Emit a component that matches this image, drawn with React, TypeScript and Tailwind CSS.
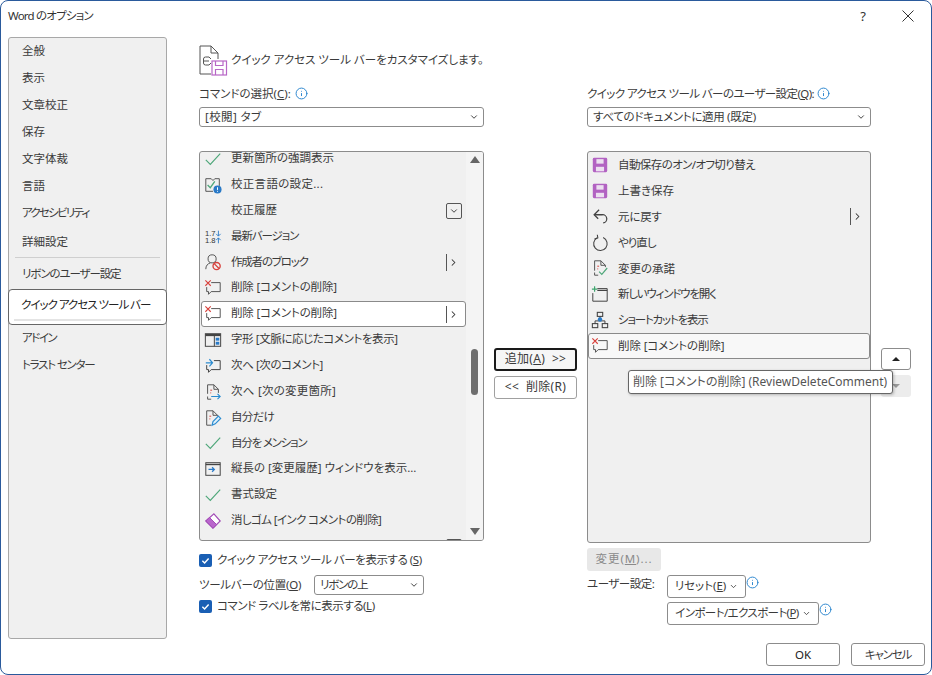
import { ChevronDown, ChevronRight, Info } from 'lucide-react';
import type { ReactNode } from 'react';

const line = '#555';

function Ico({ children }: { children: ReactNode }) {
  return (
    <svg width="18" height="18" viewBox="0 0 20 20" fill="none" stroke={line} strokeWidth="1.1">
      {children}
    </svg>
  );
}

const CheckIcon = () => (
  <Ico><path d="M2 11l5 5L18 4" stroke="#4fa77a" strokeWidth="1.3" /></Ico>
);
const LangIcon = () => (
  <Ico>
    <path d="M2 3h6l2 2 2-2h5v8M2 3v14h8" />
    <path d="M4 10l3 3 5-7" stroke="#4fa77a" strokeWidth="1.5" />
    <circle cx="15" cy="15" r="4.5" fill="#2a7ac7" stroke="none" />
    <path d="M15 12.5v3M15 16.5v1" stroke="#fff" />
  </Ico>
);
const VersionIcon = () => (
  <svg width="18" height="18" viewBox="0 0 20 20">
    <text x="1" y="9" fontSize="8.5" fill="#333" fontFamily="Liberation Sans">1.7</text>
    <text x="1" y="17" fontSize="8.5" fill="#333" fontFamily="Liberation Sans">1.8</text>
    <path d="M16 3v6M13.5 6.5L16 9l2.5-2.5" stroke="#2a7ac7" fill="none" />
    <path d="M16 17v-6M13.5 13.5L16 11l2.5 2.5" stroke="#2a7ac7" fill="none" />
  </svg>
);
const BlockIcon = () => (
  <Ico>
    <circle cx="9" cy="6.5" r="4.5" />
    <path d="M2 18c0-4 2-6 5-7" />
    <circle cx="14" cy="14.5" r="4" stroke="#d8413c" strokeWidth="1.5" />
    <path d="M11.3 11.8l5.4 5.4" stroke="#d8413c" strokeWidth="1.5" />
  </Ico>
);
const DeleteCommentIcon = () => (
  <Ico>
    <path d="M8 4h10v10H8l-3 3v-3H3V9" />
    <path d="M1.5 1.5l6 6M7.5 1.5l-6 6" stroke="#d8413c" strokeWidth="1.2" />
  </Ico>
);
const PaneIcon = () => (
  <Ico>
    <rect x="1.5" y="3" width="17" height="14" stroke="#444" />
    <path d="M1.5 4.5h17" stroke="#444" strokeWidth="2.4" />
    <path d="M11.5 5v12" stroke="#444" />
    <rect x="13" y="7.5" width="4" height="3.2" fill="#2a7ac7" stroke="none" />
    <rect x="13" y="12" width="4" height="3.2" fill="#2a7ac7" stroke="none" />
  </Ico>
);
const NextCommentIcon = () => (
  <Ico>
    <path d="M11 4h7v10H8l-3 3v-3H3V9" stroke="#444" />
    <path d="M2 6.5h7M6 2.5l3.5 4-3.5 4" stroke="#2a8bd0" strokeWidth="1.3" />
  </Ico>
);
const NextChangeIcon = () => (
  <Ico>
    <path d="M4 12V2h7l5 5v4M11 2v5h5M4 15v3h4" />
    <path d="M7 8h2M7 11h1" stroke="#d8413c" />
    <path d="M8 15h10M15 12l3 3-3 3" stroke="#2a8bd0" strokeWidth="1.2" />
  </Ico>
);
const PenDocIcon = () => (
  <Ico>
    <path d="M3 18V2h7l5 5v1M10 2v5h5M3 18h5" />
    <path d="M6 8h2M6 11h1" stroke="#d8413c" />
    <path d="M9 18l1-4 6-6 2.5 2.5-6 6z" fill="#dff0fa" stroke="#2a8bd0" strokeWidth="1.3" />
  </Ico>
);
const ReviewPaneIcon = () => (
  <Ico>
    <rect x="2" y="3" width="16" height="14" stroke="#444" />
    <path d="M2 5h16" stroke="#444" strokeWidth="1.5" />
    <path d="M5 10.5h6M9 8l2.5 2.5L9 13" stroke="#2a7ac7" strokeWidth="1.4" />
  </Ico>
);
const EraserIcon = () => (
  <Ico>
    <path d="M11 2l7 8-8 8-8-8z" fill="#fff" stroke="#a24bb6" strokeWidth="1.3" />
    <path d="M6 6l8 8-4 4-8-8z" fill="#b966cc" stroke="#a24bb6" />
  </Ico>
);
const SaveIcon = () => (
  <svg width="18" height="18" viewBox="0 0 20 20">
    <rect x="2" y="2" width="16" height="16" rx="1.5" fill="#b262c2" />
    <rect x="6" y="3.5" width="8" height="5" fill="#ecdff0" />
    <rect x="5.5" y="12" width="9" height="5" fill="#ecdff0" />
  </svg>
);
const UndoIcon = () => (
  <Ico>
    <path d="M4 7.5h8.5a4.5 4.5 0 0 1 1 9" stroke="#444" strokeWidth="1.4" />
    <path d="M9 2L3.5 7.5 8 12" stroke="#444" strokeWidth="1.4" />
  </Ico>
);
const RedoIcon = () => (
  <Ico>
    <path d="M7 4.2A7.5 7.5 0 1 0 13.5 4" stroke="#444" strokeWidth="1.2" />
    <path d="M7 .8l.6 3.6-3.8 1.2" stroke="#444" strokeWidth="1.2" />
  </Ico>
);
const AcceptIcon = () => (
  <Ico>
    <path d="M4 13V2h7l5 5v2M11 2v5h5M4 15v3h4" />
    <path d="M7 8h2M7 11h1" stroke="#d8413c" />
    <path d="M9 14l3 3 6-7" stroke="#4fa77a" strokeWidth="1.3" />
  </Ico>
);
const NewWindowIcon = () => (
  <Ico>
    <path d="M7 4h11v14H2V9" stroke="#444" />
    <path d="M7 6h11" stroke="#444" strokeWidth="1.4" />
    <path d="M4 1.5v6M1 4.5h6" stroke="#3ea56e" strokeWidth="1.3" />
  </Ico>
);
const ShortcutIcon = () => (
  <Ico>
    <rect x="7" y="1.5" width="6" height="4.5" stroke="#444" strokeWidth="1.2" />
    <rect x="1.5" y="14" width="6" height="4.5" stroke="#444" strokeWidth="1.2" />
    <rect x="12.5" y="14" width="6" height="4.5" stroke="#444" strokeWidth="1.2" />
    <path d="M10 6v4M4.5 14v-3h11v3" stroke="#444" />
    <circle cx="10" cy="9.5" r="2.5" fill="#2a7ac7" stroke="none" />
  </Ico>
);
const CustomizeIcon = () => (
  <svg width="29" height="31" viewBox="0 0 29 31" fill="none" stroke="#555" strokeWidth="1">
    <path d="M1 29V1h11l7 7v6M12 1v7h7M1 29h11" />
    <path d="M10 12H6.5a2 2 0 0 0-2 2v4a2 2 0 0 0 2 2H10M4.5 16H10" />
    <path d="M10 12l2 2M10 20l2-2" />
    <rect x="13" y="16" width="14.5" height="14" stroke="#b867c6" strokeWidth="1.2" />
    <path d="M16.5 16v4.5h7.5V16M16.5 30v-5.5h7.5V30" stroke="#b867c6" strokeWidth="1.2" />
  </svg>
);

function InfoMark() {
  return <Info size={13} strokeWidth={1.8} className="text-[#2b86cf] shrink-0" />;
}

function Split() {
  return (
    <span className="flex items-center ml-auto mr-[6px]">
      <span className="w-px h-[17px] bg-[#555]" />
      <ChevronRight size={11} strokeWidth={2.2} className="text-[#333] ml-[1px]" />
    </span>
  );
}

function BoxChevron() {
  return (
    <span className="ml-auto mr-[3px] w-[16px] h-[16px] border border-[#555] rounded-[2px] flex items-center justify-center">
      <ChevronDown size={10} strokeWidth={2.2} className="text-[#333]" />
    </span>
  );
}

type RowProps = {
  icon?: ReactNode;
  text?: string;
  trailing?: 'split' | 'box';
  selected?: string;
  track?: string;
  low?: boolean;
};

function Row({ icon, text, trailing, selected, track, low }: RowProps) {
  return (
    <div
      className={`flex items-center h-[25.87px] shrink-0 rounded-[3px] border ${
        selected ?? 'border-transparent'
      }`}
    >
      <span className="flex items-center shrink-0 w-[29px] pl-[2px]">{icon}</span>
      {text && <span className={`whitespace-nowrap ${low ? '' : 'pb-[2px]'} ${track ?? ''}`}>{text}</span>}
      {trailing === 'split' && <Split />}
      {trailing === 'box' && <BoxChevron />}
    </div>
  );
}

const leftRows: RowProps[] = [
  { icon: <CheckIcon />, text: '更新箇所の強調表示' },
  { icon: <LangIcon />, text: '校正言語の設定...', track: 'tracking-[0.3px]' },
  { text: '校正履歴', trailing: 'box' },
  { icon: <VersionIcon />, text: '最新バージョン', track: 'tracking-[-1.1px]' },
  { icon: <BlockIcon />, text: '作成者のブロック', trailing: 'split', track: 'tracking-[-1.2px]' },
  { icon: <DeleteCommentIcon />, text: '削除 [コメントの削除]', track: 'tracking-[-0.15px]' },
  { icon: <DeleteCommentIcon />, text: '削除 [コメントの削除]', trailing: 'split', selected: 'bg-white border-[#8a8a8a]', track: 'tracking-[-0.15px]' },
  { icon: <PaneIcon />, text: '字形 [文脈に応じたコメントを表示]', track: 'tracking-[-0.4px]' },
  { icon: <NextCommentIcon />, text: '次へ [次のコメント]', track: 'tracking-[-0.4px]' },
  { icon: <NextChangeIcon />, text: '次へ [次の変更箇所]', track: 'tracking-[0.25px]' },
  { icon: <PenDocIcon />, text: '自分だけ', track: 'tracking-[-0.7px]' },
  { icon: <CheckIcon />, text: '自分を メンション', track: 'tracking-[-1.2px]' },
  { icon: <ReviewPaneIcon />, text: '縦長の [変更履歴] ウィンドウを表示...' },
  { icon: <CheckIcon />, text: '書式設定' },
  { icon: <EraserIcon />, text: '消しゴム [インク コメントの削除]', track: 'tracking-[-0.6px]' },
  { trailing: 'box' },
];

const rightRows: RowProps[] = [
  { icon: <SaveIcon />, text: '自動保存のオン/オフ切り替え', track: 'tracking-[-0.6px]' },
  { icon: <SaveIcon />, text: '上書き保存' },
  { icon: <UndoIcon />, text: '元に戻す', trailing: 'split', track: 'tracking-[-0.2px]' },
  { icon: <RedoIcon />, text: 'やり直し', track: 'tracking-[-1px]' },
  { icon: <AcceptIcon />, text: '変更の承諾' },
  { icon: <NewWindowIcon />, text: '新しいウィンドウを開く', track: 'tracking-[-1.2px]' },
  { icon: <ShortcutIcon />, text: 'ショートカットを表示', track: 'tracking-[-1.2px]' },
  { icon: <DeleteCommentIcon />, text: '削除 [コメントの削除]', selected: 'bg-[#f8f8f8] border-[#8a8a8a]', track: 'tracking-[-0.1px]' },
];

const navTop = [
  { label: '全般' },
  { label: '表示' },
  { label: '文章校正' },
  { label: '保存' },
  { label: '文字体裁' },
  { label: '言語' },
  { label: 'アクセシビリティ', track: 'tracking-[-1.75px]' },
];

function NavItem({ label, track }: { label: string; track?: string }) {
  return <div className={`h-[27px] flex items-center pl-[13px] pb-[2px] whitespace-nowrap ${track ?? ''}`}>{label}</div>;
}

function Select({ value, className, track }: { value: string; className: string; track?: string }) {
  return (
    <div className={`flex items-center justify-between h-[20px] bg-white border border-[#8c8c8c] rounded-[3px] pl-[5px] pr-[4px] ${className}`}>
      <span className={`whitespace-nowrap pb-[1px] ${track ?? ''}`}>{value}</span>
      <ChevronDown size={10} strokeWidth={2.2} className="text-[#333]" />
    </div>
  );
}

function Check() {
  return (
    <span className="w-[13px] h-[13px] rounded-[2px] bg-[#1a5fb4] flex items-center justify-center shrink-0">
      <svg width="9" height="9" viewBox="0 0 10 10" fill="none" stroke="#fff" strokeWidth="1.6">
        <path d="M1.5 5.2l2.5 2.5 4.5-5" />
      </svg>
    </span>
  );
}

function Btn({ children, className }: { children: ReactNode; className: string }) {
  return (
    <div className={`flex items-center justify-center rounded-[3px] whitespace-nowrap ${className}`}>{children}</div>
  );
}

export default function App() {
  return (
    <div
      className="w-[932px] h-[675px] bg-white border border-[#2a5a9c] rounded-lg flex flex-col overflow-hidden text-[11.5px] leading-none text-[#3a3a3a] [font-feature-settings:'palt']"
      style={{ fontFamily: '"Noto Sans", "Noto Sans CJK JP", sans-serif' }}
    >
      <div className="h-[30px] shrink-0 flex items-center pl-[7px] pr-[17px]">
        <span className="text-[#333] tracking-[-0.8px]">Word のオプション</span>
        <span className="ml-auto text-[13px] text-[#333] mr-[36px]">?</span>
        <svg width="12" height="12" viewBox="0 0 12 12" stroke="#333" strokeWidth="1">
          <path d="M.5.5l11 11M11.5.5l-11 11" />
        </svg>
      </div>

      <div className="flex flex-1 min-h-0">
        <nav className="w-[159px] h-[602px] mt-[6px] ml-[7px] shrink-0 bg-[#f0f0f0] border border-[#a8a8a8] rounded-[3px]">
          {navTop.map((item) => (
            <NavItem key={item.label} label={item.label} track={item.track} />
          ))}
          <div className="mt-[2px]">
            <NavItem label="詳細設定" />
          </div>
          <div className="h-px bg-[#cfcfcf] mx-[6px] mt-[1px]" />
          <div className="mt-[3px]">
            <NavItem label="リボンのユーザー設定" track="tracking-[-1.1px]" />
          </div>
          <div className="h-[36px] bg-white border border-[#666] rounded-[4px] -mx-px mt-[1px] flex flex-col text-[#222]">
            <div className="flex-1 flex items-center pl-[12px] whitespace-nowrap tracking-[-1px]">クイック アクセス ツール バー</div>
            <div className="h-[2px] bg-[#e4e4e4] mx-[5px] mb-[3px]" />
          </div>
          <NavItem label="アドイン" track="tracking-[-1.5px]" />
          <NavItem label="トラスト センター" track="tracking-[-1.2px]" />
        </nav>

        <main className="flex-1 ml-[32px] mr-[6px] min-w-0 flex flex-col">
          <div className="h-[32px] mt-[13px] flex items-center gap-[3px] shrink-0">
            <CustomizeIcon />
            <span className="whitespace-nowrap tracking-[-0.02px]">クイック アクセス ツール バーをカスタマイズします。</span>
          </div>

          <div className="flex mt-[9px] h-[540px] shrink-0">
            <section className="w-[285px] shrink-0">
              <div className="h-[22px] flex items-center gap-[4px] pb-[5px]">
                <span>コマンドの選択(<u>C</u>):</span>
                <InfoMark />
              </div>
              <Select value="[校閲] タブ" className="w-full" track="tracking-[0.4px]" />
              <div className="mt-[24px] h-[390px] flex bg-[#f0f0f0] border border-[#8c8c8c] rounded-[3px] overflow-hidden">
                <div className="w-[266px] pl-[1px] flex flex-col -mt-[6px] shrink-0">
                  {leftRows.map((row, i) => (
                    <Row key={i} {...row} />
                  ))}
                </div>
                <div className="flex-1 bg-[#f4f4f4] flex flex-col items-center pt-[4px]">
                  <span className="w-0 h-0 border-x-[5px] border-x-transparent border-b-[7px] border-b-[#666]" />
                  <span className="w-[7px] h-[46px] rounded-full bg-[#6e6e6e] mt-[186px]" />
                  <span className="w-0 h-0 border-x-[5px] border-x-transparent border-t-[7px] border-t-[#666] mt-[133px]" />
                </div>
              </div>
              <div className="mt-[10px] h-[18px] flex items-center gap-[5px]">
                <Check />
                <span className="tracking-[-0.45px] pb-[1px]">クイック アクセス ツール バーを表示する (<u>S</u>)</span>
              </div>
              <div className="mt-[6px] h-[20px] flex items-center">
                <span className="w-[115px] tracking-[-0.25px] pb-[1px]">ツールバーの位置(<u>O</u>)</span>
                <Select value="リボンの上" className="w-[110px]" track="tracking-[-1.2px]" />
              </div>
              <div className="mt-[1px] h-[20px] flex items-center gap-[5px]">
                <Check />
                <span className="tracking-[-0.45px] pb-[1px]">コマンド ラベルを常に表示する(<u>L</u>)</span>
              </div>
            </section>

            <section className="w-[83px] ml-[10px] shrink-0 pt-[263px] flex flex-col gap-[5px] text-[12px]">
              <Btn className="h-[23px] bg-[#f6f6f6] border-2 border-[#1a1a1a]">
                <span className="tracking-[0.3px] pb-[1px]">追加(<u>A</u>)&nbsp;&nbsp;&gt;&gt;</span>
              </Btn>
              <Btn className="h-[23px] bg-white border border-[#a0a0a0]">
                <span className="tracking-[0.3px] pb-[1px]">&lt;&lt;&nbsp;&nbsp;削除(R)</span>
              </Btn>
            </section>

            <section className="w-[284px] ml-[10px] shrink-0">
              <div className="h-[22px] flex items-center gap-[3px] pb-[5px]">
                <span className="whitespace-nowrap tracking-[-0.6px]">クイック アクセス ツール バーのユーザー設定(<u>Q</u>):</span>
                <InfoMark />
              </div>
              <Select value="すべてのドキュメントに適用 (既定)" className="w-full" track="tracking-[-0.3px]" />
              <div className="mt-[24px] h-[392px] bg-[#f0f0f0] border border-[#8c8c8c] rounded-[3px] overflow-hidden">
                {rightRows.map((row, i) => (
                  <Row key={i} {...row} low />
                ))}
              </div>
              <Btn className="mt-[5px] w-[74px] h-[23px] bg-[#e8e8e8] text-[#8a8a8a]">
                <span className="tracking-[0.9px] pb-[1px]">変更(<u>M</u>)...</span>
              </Btn>
              <div className="flex mt-[4px]">
                <span className="w-[80px] pt-[3px] whitespace-nowrap tracking-[-0.5px]">ユーザー設定:</span>
                <div className="flex flex-col gap-[4px]">
                  <div className="flex items-start">
                    <Btn className="w-[79px] h-[23px] bg-white border border-[#8c8c8c] gap-[3px]">
                      <span className="pb-[1px]">リセット(<u>E</u>)</span>
                      <ChevronDown size={9} strokeWidth={2.2} />
                    </Btn>
                    <span className="mt-[1px]"><InfoMark /></span>
                  </div>
                  <div className="flex items-start">
                    <Btn className="w-[152px] h-[23px] bg-white border border-[#8c8c8c] gap-[3px]">
                      <span className="tracking-[-0.6px] pb-[1px]">インポート/エクスポート(<u>P</u>)</span>
                      <ChevronDown size={9} strokeWidth={2.2} />
                    </Btn>
                    <span className="mt-[1px]"><InfoMark /></span>
                  </div>
                </div>
              </div>
            </section>

            <section className="relative w-[30px] ml-[10px] shrink-0 pt-[263px] flex flex-col gap-[5px]">
              <Btn className="h-[22px] bg-white border border-[#8c8c8c]">
                <span className="w-0 h-0 border-x-[4px] border-x-transparent border-b-[4px] border-b-[#222]" />
              </Btn>
              <Btn className="h-[22px] bg-[#ececec]">
                <span className="w-0 h-0 border-x-[4px] border-x-transparent border-t-[4px] border-t-[#999]" />
              </Btn>
              <div className="absolute left-[-253px] top-[285px] w-[265px] h-[24px] bg-white border border-[#666] rounded-[3px] shadow-[1px_1px_3px_rgba(0,0,0,0.25)] flex items-center pl-[4px] pb-[1px] text-[12px] text-[#555] whitespace-nowrap">
                削除 [コメントの削除] (ReviewDeleteComment)
              </div>
            </section>
          </div>

          <div className="flex justify-end gap-[11px] mt-[18px]">
            <Btn className="w-[74px] h-[23px] bg-white border border-[#8c8c8c] text-[#222]">OK</Btn>
            <Btn className="w-[74px] h-[23px] bg-white border border-[#8c8c8c] tracking-[-1.2px]">キャンセル</Btn>
          </div>
        </main>
      </div>
    </div>
  );
}
